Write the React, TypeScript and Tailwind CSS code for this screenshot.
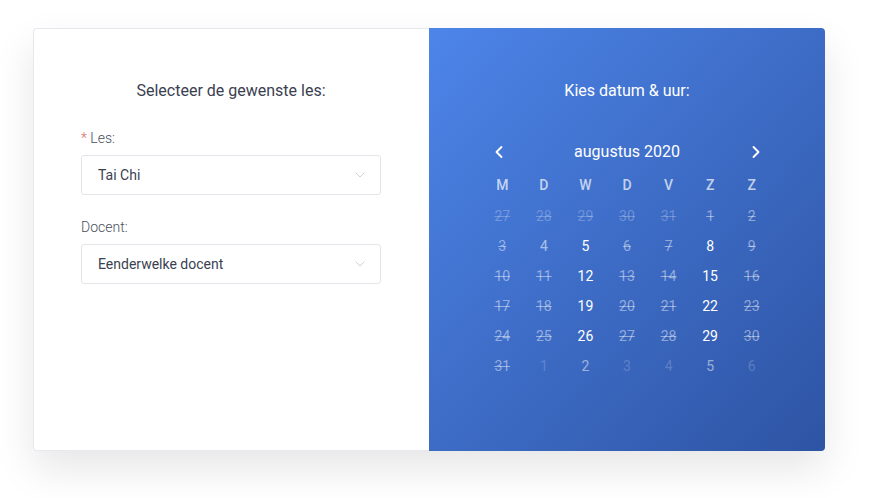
import { ChevronDown, ChevronLeft, ChevronRight } from 'lucide-react';

type Day = { n: number; kind: 'open' | 'closed' | 'dim' | 'faint' | 'out' | 'outStruck' };

const weekdays = ['M', 'D', 'W', 'D', 'V', 'Z', 'Z'];

const weeks: Day[][] = [
  [
    { n: 27, kind: 'outStruck' },
    { n: 28, kind: 'outStruck' },
    { n: 29, kind: 'outStruck' },
    { n: 30, kind: 'outStruck' },
    { n: 31, kind: 'outStruck' },
    { n: 1, kind: 'closed' },
    { n: 2, kind: 'closed' },
  ],
  [
    { n: 3, kind: 'closed' },
    { n: 4, kind: 'dim' },
    { n: 5, kind: 'open' },
    { n: 6, kind: 'closed' },
    { n: 7, kind: 'closed' },
    { n: 8, kind: 'open' },
    { n: 9, kind: 'closed' },
  ],
  [
    { n: 10, kind: 'closed' },
    { n: 11, kind: 'closed' },
    { n: 12, kind: 'open' },
    { n: 13, kind: 'closed' },
    { n: 14, kind: 'closed' },
    { n: 15, kind: 'open' },
    { n: 16, kind: 'closed' },
  ],
  [
    { n: 17, kind: 'closed' },
    { n: 18, kind: 'closed' },
    { n: 19, kind: 'open' },
    { n: 20, kind: 'closed' },
    { n: 21, kind: 'closed' },
    { n: 22, kind: 'open' },
    { n: 23, kind: 'closed' },
  ],
  [
    { n: 24, kind: 'closed' },
    { n: 25, kind: 'closed' },
    { n: 26, kind: 'open' },
    { n: 27, kind: 'closed' },
    { n: 28, kind: 'closed' },
    { n: 29, kind: 'open' },
    { n: 30, kind: 'closed' },
  ],
  [
    { n: 31, kind: 'closed' },
    { n: 1, kind: 'out' },
    { n: 2, kind: 'faint' },
    { n: 3, kind: 'out' },
    { n: 4, kind: 'out' },
    { n: 5, kind: 'faint' },
    { n: 6, kind: 'out' },
  ],
];

const dayClass: Record<Day['kind'], string> = {
  open: 'text-white',
  closed: 'text-white/45 line-through',
  dim: 'text-white/55',
  faint: 'text-white/50',
  out: 'text-white/20',
  outStruck: 'text-white/25 line-through',
};

function Select({ value }: { value: string }) {
  return (
    <div className="flex h-10 w-[300px] items-center justify-between rounded-[3px] border border-[#e3e5ea] bg-white pl-4 pr-3 text-sm text-[#3a3f51]">
      <span>{value}</span>
      <ChevronDown className="h-4 w-4 text-[#c3c7cf]" strokeWidth={1.25} />
    </div>
  );
}

export default function App() {
  return (
    <div className="h-[498px] w-full bg-white pl-[33px] pt-[28px] font-['Roboto',sans-serif]">
      <div className="flex h-[423px] w-[792px] rounded-[4px] shadow-[0_18px_40px_rgba(0,0,0,0.10)]">
        <div className="flex w-[396px] flex-col rounded-l-[4px] border border-r-0 border-[#e6e8ee] bg-white pl-[47px] pr-12 pt-[50px]">
          <h2 className="text-center text-base leading-6 text-[#3b4051]">Selecteer de gewenste les:</h2>
          <label className="mt-[25px] text-sm font-light leading-5 text-[#4a4f5c]">
            <span className="text-[#e06a6a]">*</span> Les:
          </label>
          <div className="mt-[7px]">
            <Select value="Tai Chi" />
          </div>
          <label className="mt-[22px] text-sm font-light leading-5 text-[#4a4f5c]">Docent:</label>
          <div className="mt-[7px]">
            <Select value="Eenderwelke docent" />
          </div>
        </div>

        <div className="flex w-[396px] flex-col items-center rounded-r-[4px] bg-gradient-to-br from-[#4d85e9] to-[#2e54a4] pt-[51px] text-white">
          <h2 className="text-base leading-6">Kies datum &amp; uur:</h2>
          <div className="mt-[37px] flex w-[277px] items-center justify-between">
            <ChevronLeft className="h-5 w-5" strokeWidth={2.25} />
            <span className="text-base leading-6">augustus 2020</span>
            <ChevronRight className="h-5 w-5" strokeWidth={2.25} />
          </div>
          <div className="mt-[11px] grid w-[291px] grid-cols-7">
            {weekdays.map((w, i) => (
              <div key={i} className="text-center text-sm font-medium leading-5 text-white/70">
                {w}
              </div>
            ))}
          </div>
          <div className="mt-[11px] grid w-[291px] grid-cols-7">
            {weeks.flat().map((d, i) => (
              <div key={i} className={`h-[30px] text-center text-sm leading-5 ${dayClass[d.kind]}`}>
                {d.n}
              </div>
            ))}
          </div>
        </div>
      </div>
    </div>
  );
}
